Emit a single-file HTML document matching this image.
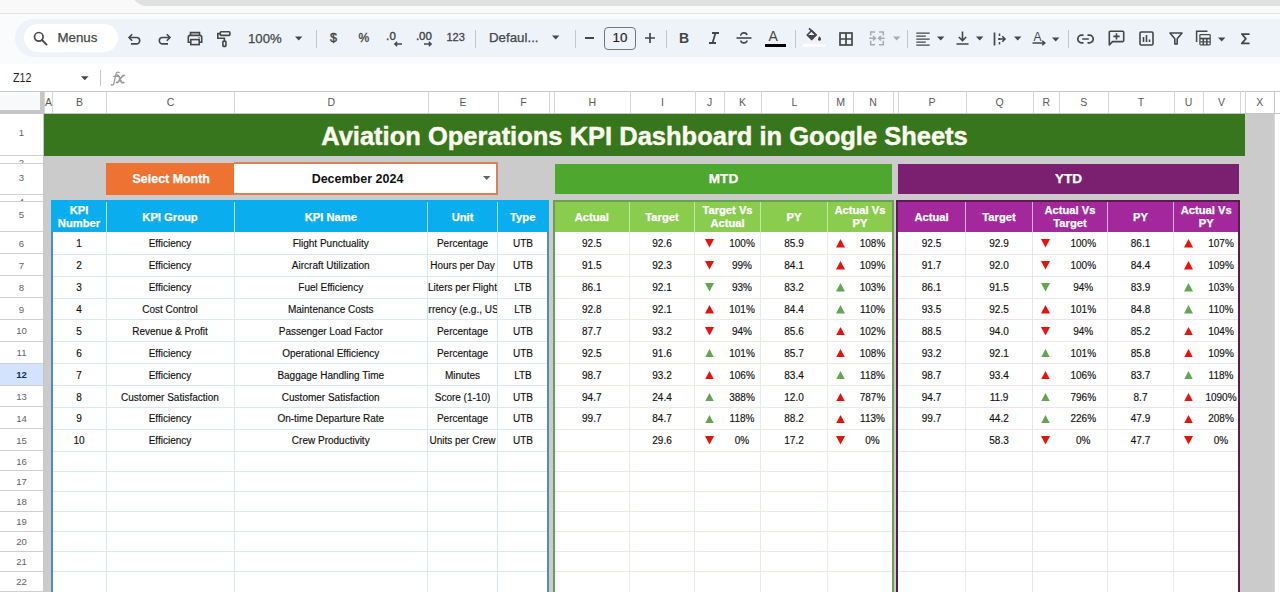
<!DOCTYPE html>
<html><head><meta charset="utf-8"><style>
html,body{margin:0;padding:0;width:1280px;height:592px;overflow:hidden;background:#fff;font-family:"Liberation Sans", sans-serif;}
.bt{-webkit-text-stroke:0.15px #111}
div{position:absolute;}
svg{position:absolute;}
</style></head><body>
<div style="left:0;top:0;width:1280px;height:13px;background:#f9f9f9"></div>
<div style="left:131px;top:-20px;width:1200px;height:25.5px;background:#dfe1e0;border-radius:0 0 0 16px"></div>
<div style="left:0;top:12.5px;width:1280px;height:1px;background:#e4e4e4"></div>
<div style="left:0;top:13.5px;width:1280px;height:50.5px;background:#f9fbfd"></div>
<div style="left:15px;top:19px;width:1300px;height:38px;background:#eef2f9;border-radius:19px"></div>
<div style="left:24px;top:24px;width:94px;height:28px;background:#fff;border-radius:14px"></div>
<div style="left:0;top:64px;width:1280px;height:27px;background:#fff"></div>
<svg style="position:absolute;left:33px;top:31px" width="15" height="15" viewBox="0 0 15 15"><circle cx="5.8" cy="5.8" r="4.3" fill="none" stroke="#444746" stroke-width="1.7"/><path d="M9 9L13.6 13.6" stroke="#444746" stroke-width="1.8" stroke-linecap="round"/></svg>
<div style="left:57.5px;top:24px;height:28px;line-height:28px;font-size:13.3px;color:#444746;-webkit-text-stroke:0.25px #444746">Menus</div>
<svg style="position:absolute;left:127px;top:32px" width="15" height="14" viewBox="0 0 15 14"><path d="M5.2 2.2L2 5.5L5.2 8.8" fill="none" stroke="#444746" stroke-width="1.6" stroke-linejoin="miter"/><path d="M2.3 5.5H9.5A3.2 3.2 0 0 1 9.5 11.9H4" fill="none" stroke="#444746" stroke-width="1.6"/></svg>
<svg style="position:absolute;left:157px;top:32px" width="15" height="14" viewBox="0 0 15 14"><g transform="translate(15,0) scale(-1,1)"><path d="M5.2 2.2L2 5.5L5.2 8.8" fill="none" stroke="#444746" stroke-width="1.6"/><path d="M2.3 5.5H9.5A3.2 3.2 0 0 1 9.5 11.9H4" fill="none" stroke="#444746" stroke-width="1.6"/></g></svg>
<svg style="position:absolute;left:186px;top:31px" width="18" height="15" viewBox="0 0 18 15"><path d="M4.5 4.3V1.6H13.5V4.3" fill="none" stroke="#444746" stroke-width="1.6"/><path d="M4.3 11.3H2.3V6.2A1.8 1.8 0 0 1 4.1 4.4H13.9A1.8 1.8 0 0 1 15.7 6.2V11.3H13.7" fill="none" stroke="#444746" stroke-width="1.6"/><rect x="4.8" y="8.6" width="8.4" height="5" fill="none" stroke="#444746" stroke-width="1.6"/><circle cx="13" cy="6.8" r="0.7" fill="#444746"/></svg>
<svg style="position:absolute;left:216px;top:30px" width="16" height="18" viewBox="0 0 16 18"><rect x="4.3" y="1.8" width="9.6" height="3.6" rx="0.8" fill="none" stroke="#444746" stroke-width="1.6"/><path d="M4.3 3.6H1.8V8.2H8.4V11" fill="none" stroke="#444746" stroke-width="1.6"/><rect x="6.9" y="11.2" width="3" height="5.2" rx="0.6" fill="none" stroke="#444746" stroke-width="1.6"/></svg>
<div style="left:248px;top:24.8px;height:28px;line-height:28px;font-size:13.2px;color:#444746;-webkit-text-stroke:0.25px #444746">100%</div>
<svg style="position:absolute;left:295px;top:35.5px" width="8" height="5" viewBox="0 0 8 5"><path d="M0 0.5H7.4L3.7 4.4Z" fill="#444746"/></svg>
<div style="left:316px;top:29.5px;width:1px;height:18px;background:#c7c7c7"></div>
<div style="left:330px;top:24px;height:28px;line-height:28px;font-size:12.5px;color:#444746;-webkit-text-stroke:0.45px #444746">$</div>
<div style="left:358.5px;top:24px;height:28px;line-height:28px;font-size:12px;color:#444746;-webkit-text-stroke:0.35px #444746">%</div>
<div style="left:386px;top:22px;height:28px;line-height:28px;font-size:11.5px;color:#444746;-webkit-text-stroke:0.4px #444746;letter-spacing:0.2px">.0</div>
<svg style="position:absolute;left:393px;top:41px" width="10" height="6" viewBox="0 0 10 6"><path d="M9 3H2M4.2 0.8L1.8 3L4.2 5.2" fill="none" stroke="#444746" stroke-width="1.4"/></svg>
<div style="left:416px;top:22px;height:28px;line-height:28px;font-size:11.5px;color:#444746;-webkit-text-stroke:0.4px #444746;letter-spacing:-0.1px">.00</div>
<svg style="position:absolute;left:423px;top:41px" width="10" height="6" viewBox="0 0 10 6"><path d="M1 3H8M5.8 0.8L8.2 3L5.8 5.2" fill="none" stroke="#444746" stroke-width="1.4"/></svg>
<div style="left:446.5px;top:22.8px;height:28px;line-height:28px;font-size:11px;color:#444746;-webkit-text-stroke:0.3px #444746">123</div>
<div style="left:474.5px;top:29.5px;width:1px;height:18px;background:#c7c7c7"></div>
<div style="left:489px;top:24px;height:28px;line-height:28px;font-size:13.3px;color:#444746;-webkit-text-stroke:0.25px #444746">Defaul...</div>
<svg style="position:absolute;left:552px;top:35.3px" width="8" height="5" viewBox="0 0 8 5"><path d="M0 0.5H7.4L3.7 4.4Z" fill="#444746"/></svg>
<div style="left:574.5px;top:29.5px;width:1px;height:18px;background:#c7c7c7"></div>
<div style="left:584.5px;top:37.2px;width:9.5px;height:1.6px;background:#444746"></div>
<div style="left:604px;top:27px;width:32px;height:22.5px;border:1px solid #747775;border-radius:4px;box-sizing:border-box;text-align:center;line-height:20.5px;font-size:13.3px;color:#1f1f1f;-webkit-text-stroke:0.2px #1f1f1f">10</div>
<svg style="position:absolute;left:644.8px;top:33px" width="10" height="10" viewBox="0 0 10 10"><path d="M5 0V10M0 5H10" stroke="#444746" stroke-width="1.7"/></svg>
<div style="left:666px;top:29.5px;width:1px;height:18px;background:#c7c7c7"></div>
<div style="left:679px;top:24px;height:28px;line-height:28px;font-size:14px;font-weight:bold;color:#444746">B</div>
<svg style="position:absolute;left:708px;top:32px" width="12" height="12" viewBox="0 0 12 12"><path d="M4 1H11M1 11H8M7.5 1L4.5 11" fill="none" stroke="#444746" stroke-width="1.8"/></svg>
<svg style="position:absolute;left:736px;top:32px" width="16" height="12" viewBox="0 0 16 12"><path d="M0.5 6H15.5" stroke="#444746" stroke-width="1.6"/><path d="M4.8 3.6A3 2.4 0 0 1 11 3.2M4.8 8.6A3.1 2.3 0 0 0 11 8.6" fill="none" stroke="#444746" stroke-width="1.6"/></svg>
<div style="left:768.5px;top:22px;height:28px;line-height:28px;font-size:14px;color:#444746">A</div>
<div style="left:765px;top:43.7px;width:21px;height:3.2px;background:#000"></div>
<div style="left:794.5px;top:29.5px;width:1px;height:18px;background:#c7c7c7"></div>
<svg style="position:absolute;left:798px;top:24px" width="32" height="26" viewBox="0 0 32 26"><path d="M11 4.3L18.2 11.3" stroke="#444746" stroke-width="1.7"/><path d="M9.2 11L13.7 6.5L18.2 11L13.7 15.5Z" fill="none" stroke="#444746" stroke-width="1.7" stroke-linejoin="round"/><path d="M9.2 11H18.2L13.7 15.5Z" fill="#444746"/><path d="M21.5 12.2C22.7 13.9 23 14.6 23 15.3A1.5 1.5 0 0 1 20 15.3C20 14.6 20.3 13.9 21.5 12.2Z" fill="#444746"/><rect x="4.5" y="19.8" width="22.5" height="3" fill="#fff"/></svg>
<svg style="position:absolute;left:838.5px;top:31.5px" width="14" height="14" viewBox="0 0 14 14"><rect x="1" y="1" width="12" height="12" fill="none" stroke="#444746" stroke-width="1.7"/><path d="M7 1V13M1 7H13" stroke="#444746" stroke-width="1.7"/></svg>
<svg style="position:absolute;left:866px;top:29px" width="22" height="19" viewBox="0 0 22 19"><path d="M9 3H4.7V6.5M4.7 11.8V15.7H9M13 3H17.3V6.5M17.3 11.8V15.7H13" fill="none" stroke="#a9abaa" stroke-width="1.5"/><path d="M3.3 9.2H9.3M7.1 7L9.4 9.2L7.1 11.4M18.7 9.2H12.7M14.9 7L12.6 9.2L14.9 11.4" fill="none" stroke="#a9abaa" stroke-width="1.5"/></svg>
<svg style="position:absolute;left:893px;top:36.4px" width="8" height="5" viewBox="0 0 8 5"><path d="M0 0.5H7.4L3.7 4.4Z" fill="#a9abaa"/></svg>
<div style="left:906.5px;top:29.5px;width:1px;height:18px;background:#c7c7c7"></div>
<svg style="position:absolute;left:916px;top:31.5px" width="14" height="14" viewBox="0 0 14 14"><path d="M0.3 1.1H13.7M0.3 4.1H9.8M0.3 7.1H13.7M0.3 10.1H9.8M0.3 13.1H13.7" stroke="#444746" stroke-width="1.3"/></svg>
<svg style="position:absolute;left:936.5px;top:36.4px" width="8" height="5" viewBox="0 0 8 5"><path d="M0 0.5H7.4L3.7 4.4Z" fill="#444746"/></svg>
<svg style="position:absolute;left:955.5px;top:31px" width="13" height="14" viewBox="0 0 13 14"><path d="M6.5 0.5V9.5M2.8 6L6.5 9.6L10.2 6M0.5 13H12.5" fill="none" stroke="#444746" stroke-width="1.6"/></svg>
<svg style="position:absolute;left:975.5px;top:36.4px" width="8" height="5" viewBox="0 0 8 5"><path d="M0 0.5H7.4L3.7 4.4Z" fill="#444746"/></svg>
<svg style="position:absolute;left:993px;top:31.5px" width="14" height="14" viewBox="0 0 14 14"><path d="M1.5 0.5V13.5" stroke="#444746" stroke-width="1.7"/><path d="M6.5 1.5V4M6.5 6V8M6.5 10V12.5" stroke="#444746" stroke-width="1.5"/><path d="M5 7H11.8M9.3 4.3L12 7L9.3 9.7" fill="none" stroke="#444746" stroke-width="1.6"/></svg>
<svg style="position:absolute;left:1014px;top:36.4px" width="8" height="5" viewBox="0 0 8 5"><path d="M0 0.5H7.4L3.7 4.4Z" fill="#444746"/></svg>
<div style="left:1033.5px;top:22.5px;height:28px;line-height:28px;font-size:12px;color:#444746">A</div>
<svg style="position:absolute;left:1032px;top:39.5px" width="14" height="6" viewBox="0 0 14 6"><path d="M0.5 3H12.6M10.2 0.8L12.8 3L10.2 5.2" fill="none" stroke="#444746" stroke-width="1.5"/></svg>
<svg style="position:absolute;left:1052px;top:36.5px" width="8" height="5" viewBox="0 0 8 5"><path d="M0 0.5H7.4L3.7 4.4Z" fill="#444746"/></svg>
<div style="left:1067.5px;top:29.5px;width:1px;height:18px;background:#c7c7c7"></div>
<svg style="position:absolute;left:1077px;top:33.5px" width="17" height="10" viewBox="0 0 17 10"><path d="M6.5 1.2H4.6A3.8 3.8 0 0 0 4.6 8.8H6.5M10.5 1.2H12.4A3.8 3.8 0 0 1 12.4 8.8H10.5M5.2 5H11.8" fill="none" stroke="#444746" stroke-width="1.7"/></svg>
<svg style="position:absolute;left:1107.5px;top:30px" width="17" height="16" viewBox="0 0 17 16"><path d="M1.3 15V2.2A1 1 0 0 1 2.3 1.2H14.7A1 1 0 0 1 15.7 2.2V10.6A1 1 0 0 1 14.7 11.6H4.5Z" fill="none" stroke="#444746" stroke-width="1.6" stroke-linejoin="round"/><path d="M8.5 3.2V9.6M5.3 6.4H11.7" stroke="#444746" stroke-width="1.6"/></svg>
<svg style="position:absolute;left:1139px;top:31px" width="15" height="15" viewBox="0 0 15 15"><rect x="1" y="1" width="13" height="13" rx="1.2" fill="none" stroke="#444746" stroke-width="1.6"/><path d="M4.5 6V11M7.5 4V11M10.5 8.5V11" stroke="#444746" stroke-width="1.6"/></svg>
<svg style="position:absolute;left:1169px;top:32px" width="14" height="13" viewBox="0 0 14 13"><path d="M1 1H13L8.2 6.8V12H5.8V6.8Z" fill="none" stroke="#444746" stroke-width="1.6" stroke-linejoin="round"/></svg>
<svg style="position:absolute;left:1195px;top:30px" width="17" height="17" viewBox="0 0 17 17"><path d="M1.6 12V1.2H12.5" fill="none" stroke="#444746" stroke-width="1.5"/><rect x="4.3" y="3.9" width="11.5" height="11.5" rx="1.3" fill="#444746"/><rect x="5.5" y="5.2" width="9.1" height="2.5" fill="#eef2f9"/><rect x="5.5" y="9.4" width="2" height="1.9" fill="#eef2f9"/><rect x="5.5" y="12.4" width="2" height="1.9" fill="#eef2f9"/><rect x="9.05" y="9.4" width="2" height="1.9" fill="#eef2f9"/><rect x="9.05" y="12.4" width="2" height="1.9" fill="#eef2f9"/><rect x="12.6" y="9.4" width="2" height="1.9" fill="#eef2f9"/><rect x="12.6" y="12.4" width="2" height="1.9" fill="#eef2f9"/></svg>
<svg style="position:absolute;left:1217.5px;top:36.5px" width="8" height="5" viewBox="0 0 8 5"><path d="M0 0.5H7.4L3.7 4.4Z" fill="#444746"/></svg>
<svg style="position:absolute;left:1240.5px;top:33px" width="10" height="12" viewBox="0 0 10 12"><path d="M8.6 1.1H1L4.8 5.7L1 10.3H8.6" fill="none" stroke="#444746" stroke-width="1.8" stroke-linejoin="miter"/></svg>
<div style="left:13px;top:65.3px;height:27px;line-height:27px;font-size:12.4px;transform:scaleX(0.86);transform-origin:0 0;color:#1f1f1f">Z12</div>
<svg style="position:absolute;left:81px;top:75.5px" width="8" height="5" viewBox="0 0 8 5"><path d="M0 0.2H7.6L3.8 4.2Z" fill="#444746"/></svg>
<div style="left:99.8px;top:70px;width:1px;height:16px;background:#c7c7c7"></div>
<svg style="position:absolute;left:110px;top:70px" width="17" height="17" viewBox="0 0 17 17"><path d="M9.2 2.6C7.8 1.7 6.4 2.1 5.9 4.1L4 13C3.6 14.8 2.6 15.4 1.3 14.8M3.6 6.3H8" fill="none" stroke="#9a9a9a" stroke-width="1.3" stroke-linecap="round"/><path d="M7.2 5.2C8.2 5 8.8 5.6 9.5 7.5L11.3 11.8C11.8 12.8 12.5 13 13.8 12.4M14.2 5.4C13 5.3 12.3 6 11.2 7.6L8.6 11.4C8 12.4 7.3 12.8 6.6 12.5" fill="none" stroke="#999" stroke-width="1.7" stroke-linecap="round"/></svg>
<div style="left:0.00px;top:91.00px;width:1280.00px;height:23.00px;background:#fff;border-top:1px solid #c4c7c5;box-sizing:border-box"></div>
<div style="left:44.00px;top:91.00px;width:8.00px;height:23.00px;border-left:1px solid #d6d6d6;box-sizing:border-box;text-align:center;line-height:23px;font-size:10.5px;color:#5a5a5a">A</div>
<div style="left:52.00px;top:91.00px;width:54.00px;height:23.00px;border-left:1px solid #d6d6d6;box-sizing:border-box;text-align:center;line-height:23px;font-size:10.5px;color:#5a5a5a">B</div>
<div style="left:106.00px;top:91.00px;width:128.00px;height:23.00px;border-left:1px solid #d6d6d6;box-sizing:border-box;text-align:center;line-height:23px;font-size:10.5px;color:#5a5a5a">C</div>
<div style="left:234.00px;top:91.00px;width:193.50px;height:23.00px;border-left:1px solid #d6d6d6;box-sizing:border-box;text-align:center;line-height:23px;font-size:10.5px;color:#5a5a5a">D</div>
<div style="left:427.50px;top:91.00px;width:70.00px;height:23.00px;border-left:1px solid #d6d6d6;box-sizing:border-box;text-align:center;line-height:23px;font-size:10.5px;color:#5a5a5a">E</div>
<div style="left:497.50px;top:91.00px;width:51.00px;height:23.00px;border-left:1px solid #d6d6d6;box-sizing:border-box;text-align:center;line-height:23px;font-size:10.5px;color:#5a5a5a">F</div>
<div style="left:548.50px;top:91.00px;width:5.50px;height:23.00px;border-left:1px solid #d6d6d6;box-sizing:border-box;text-align:center;line-height:23px;font-size:10.5px;color:#5a5a5a"></div>
<div style="left:554.00px;top:91.00px;width:75.50px;height:23.00px;border-left:1px solid #d6d6d6;box-sizing:border-box;text-align:center;line-height:23px;font-size:10.5px;color:#5a5a5a">H</div>
<div style="left:629.50px;top:91.00px;width:65.00px;height:23.00px;border-left:1px solid #d6d6d6;box-sizing:border-box;text-align:center;line-height:23px;font-size:10.5px;color:#5a5a5a">I</div>
<div style="left:694.50px;top:91.00px;width:29.00px;height:23.00px;border-left:1px solid #d6d6d6;box-sizing:border-box;text-align:center;line-height:23px;font-size:10.5px;color:#5a5a5a">J</div>
<div style="left:723.50px;top:91.00px;width:37.00px;height:23.00px;border-left:1px solid #d6d6d6;box-sizing:border-box;text-align:center;line-height:23px;font-size:10.5px;color:#5a5a5a">K</div>
<div style="left:760.50px;top:91.00px;width:67.00px;height:23.00px;border-left:1px solid #d6d6d6;box-sizing:border-box;text-align:center;line-height:23px;font-size:10.5px;color:#5a5a5a">L</div>
<div style="left:827.50px;top:91.00px;width:25.00px;height:23.00px;border-left:1px solid #d6d6d6;box-sizing:border-box;text-align:center;line-height:23px;font-size:10.5px;color:#5a5a5a">M</div>
<div style="left:852.50px;top:91.00px;width:40.00px;height:23.00px;border-left:1px solid #d6d6d6;box-sizing:border-box;text-align:center;line-height:23px;font-size:10.5px;color:#5a5a5a">N</div>
<div style="left:892.50px;top:91.00px;width:5.00px;height:23.00px;border-left:1px solid #d6d6d6;box-sizing:border-box;text-align:center;line-height:23px;font-size:10.5px;color:#5a5a5a"></div>
<div style="left:897.50px;top:91.00px;width:68.00px;height:23.00px;border-left:1px solid #d6d6d6;box-sizing:border-box;text-align:center;line-height:23px;font-size:10.5px;color:#5a5a5a">P</div>
<div style="left:965.50px;top:91.00px;width:67.00px;height:23.00px;border-left:1px solid #d6d6d6;box-sizing:border-box;text-align:center;line-height:23px;font-size:10.5px;color:#5a5a5a">Q</div>
<div style="left:1032.50px;top:91.00px;width:26.50px;height:23.00px;border-left:1px solid #d6d6d6;box-sizing:border-box;text-align:center;line-height:23px;font-size:10.5px;color:#5a5a5a">R</div>
<div style="left:1059.00px;top:91.00px;width:48.50px;height:23.00px;border-left:1px solid #d6d6d6;box-sizing:border-box;text-align:center;line-height:23px;font-size:10.5px;color:#5a5a5a">S</div>
<div style="left:1107.50px;top:91.00px;width:66.00px;height:23.00px;border-left:1px solid #d6d6d6;box-sizing:border-box;text-align:center;line-height:23px;font-size:10.5px;color:#5a5a5a">T</div>
<div style="left:1173.50px;top:91.00px;width:29.00px;height:23.00px;border-left:1px solid #d6d6d6;box-sizing:border-box;text-align:center;line-height:23px;font-size:10.5px;color:#5a5a5a">U</div>
<div style="left:1202.50px;top:91.00px;width:37.00px;height:23.00px;border-left:1px solid #d6d6d6;box-sizing:border-box;text-align:center;line-height:23px;font-size:10.5px;color:#5a5a5a">V</div>
<div style="left:1239.50px;top:91.00px;width:5.50px;height:23.00px;border-left:1px solid #d6d6d6;box-sizing:border-box;text-align:center;line-height:23px;font-size:10.5px;color:#5a5a5a"></div>
<div style="left:1245.00px;top:91.00px;width:28.50px;height:23.00px;border-left:1px solid #d6d6d6;box-sizing:border-box;text-align:center;line-height:23px;font-size:10.5px;color:#5a5a5a">X</div>
<div style="left:1273.50px;top:91.00px;width:56.50px;height:23.00px;border-left:1px solid #c4c7c5;box-sizing:border-box"></div>
<div style="left:44.00px;top:113.00px;width:1236.00px;height:1.00px;background:#c4c7c5"></div>
<div style="left:0.00px;top:92.00px;width:44.00px;height:22.00px;background:#f8f9fa"></div>
<div style="left:40.00px;top:92.00px;width:4.00px;height:22.00px;background:#c6c6c6"></div>
<div style="left:0.00px;top:110.00px;width:44.00px;height:4.00px;background:#c6c6c6"></div>
<div style="left:0.00px;top:114.00px;width:43.00px;height:41.50px;background:#fff;border-bottom:1px solid #d0d0d0;box-sizing:border-box;overflow:hidden;text-align:center;font-size:9.6px;color:#5f6368;font-weight:normal;line-height:41.5px"><span style="position:relative;top:-1.7px">1</span></div>
<div style="left:0.00px;top:155.50px;width:43.00px;height:8.00px;background:#fff;border-bottom:1px solid #d0d0d0;box-sizing:border-box;overflow:hidden;text-align:center;font-size:9.6px;color:#5f6368;font-weight:normal;line-height:10.6px"><span style="position:relative;top:2.8px">2</span></div>
<div style="left:0.00px;top:163.50px;width:43.00px;height:31.00px;background:#fff;border-bottom:1px solid #d0d0d0;box-sizing:border-box;overflow:hidden;text-align:center;font-size:9.6px;color:#5f6368;font-weight:normal;line-height:31.0px"><span style="position:relative;top:-1.7px">3</span></div>
<div style="left:0.00px;top:194.50px;width:43.00px;height:7.00px;background:#fff;border-bottom:1px solid #d0d0d0;box-sizing:border-box;overflow:hidden;text-align:center;font-size:9.6px;color:#5f6368;font-weight:normal;line-height:10.6px"><span style="position:relative;top:2.4px">4</span></div>
<div style="left:0.00px;top:201.50px;width:43.00px;height:30.80px;background:#fff;border-bottom:1px solid #d0d0d0;box-sizing:border-box;overflow:hidden;text-align:center;font-size:9.6px;color:#5f6368;font-weight:normal;line-height:30.8px"><span style="position:relative;top:-1.7px">5</span></div>
<div style="left:0.00px;top:232.30px;width:43.00px;height:21.90px;background:#fff;border-bottom:1px solid #d0d0d0;box-sizing:border-box;overflow:hidden;text-align:center;font-size:9.6px;color:#5f6368;font-weight:normal;line-height:21.9px"><span style="position:relative;top:0.6px">6</span></div>
<div style="left:0.00px;top:254.20px;width:43.00px;height:21.90px;background:#fff;border-bottom:1px solid #d0d0d0;box-sizing:border-box;overflow:hidden;text-align:center;font-size:9.6px;color:#5f6368;font-weight:normal;line-height:21.9px"><span style="position:relative;top:0.6px">7</span></div>
<div style="left:0.00px;top:276.10px;width:43.00px;height:21.90px;background:#fff;border-bottom:1px solid #d0d0d0;box-sizing:border-box;overflow:hidden;text-align:center;font-size:9.6px;color:#5f6368;font-weight:normal;line-height:21.9px"><span style="position:relative;top:0.6px">8</span></div>
<div style="left:0.00px;top:298.00px;width:43.00px;height:21.90px;background:#fff;border-bottom:1px solid #d0d0d0;box-sizing:border-box;overflow:hidden;text-align:center;font-size:9.6px;color:#5f6368;font-weight:normal;line-height:21.9px"><span style="position:relative;top:0.6px">9</span></div>
<div style="left:0.00px;top:319.90px;width:43.00px;height:21.90px;background:#fff;border-bottom:1px solid #d0d0d0;box-sizing:border-box;overflow:hidden;text-align:center;font-size:9.6px;color:#5f6368;font-weight:normal;line-height:21.9px"><span style="position:relative;top:0.6px">10</span></div>
<div style="left:0.00px;top:341.80px;width:43.00px;height:21.90px;background:#fff;border-bottom:1px solid #d0d0d0;box-sizing:border-box;overflow:hidden;text-align:center;font-size:9.6px;color:#5f6368;font-weight:normal;line-height:21.9px"><span style="position:relative;top:0.6px">11</span></div>
<div style="left:0.00px;top:363.70px;width:43.00px;height:21.90px;background:#d3e3fd;border-bottom:1px solid #d0d0d0;box-sizing:border-box;overflow:hidden;text-align:center;font-size:9.6px;color:#0b2f6b;font-weight:bold;line-height:21.9px"><span style="position:relative;top:0.6px">12</span></div>
<div style="left:0.00px;top:385.60px;width:43.00px;height:21.90px;background:#fff;border-bottom:1px solid #d0d0d0;box-sizing:border-box;overflow:hidden;text-align:center;font-size:9.6px;color:#5f6368;font-weight:normal;line-height:21.9px"><span style="position:relative;top:0.6px">13</span></div>
<div style="left:0.00px;top:407.50px;width:43.00px;height:21.90px;background:#fff;border-bottom:1px solid #d0d0d0;box-sizing:border-box;overflow:hidden;text-align:center;font-size:9.6px;color:#5f6368;font-weight:normal;line-height:21.9px"><span style="position:relative;top:0.6px">14</span></div>
<div style="left:0.00px;top:429.40px;width:43.00px;height:21.90px;background:#fff;border-bottom:1px solid #d0d0d0;box-sizing:border-box;overflow:hidden;text-align:center;font-size:9.6px;color:#5f6368;font-weight:normal;line-height:21.9px"><span style="position:relative;top:0.6px">15</span></div>
<div style="left:0.00px;top:451.30px;width:43.00px;height:20.10px;background:#fff;border-bottom:1px solid #d0d0d0;box-sizing:border-box;overflow:hidden;text-align:center;font-size:9.6px;color:#5f6368;font-weight:normal;line-height:20.1px"><span style="position:relative;top:0.6px">16</span></div>
<div style="left:0.00px;top:471.40px;width:43.00px;height:20.10px;background:#fff;border-bottom:1px solid #d0d0d0;box-sizing:border-box;overflow:hidden;text-align:center;font-size:9.6px;color:#5f6368;font-weight:normal;line-height:20.1px"><span style="position:relative;top:0.6px">17</span></div>
<div style="left:0.00px;top:491.50px;width:43.00px;height:20.10px;background:#fff;border-bottom:1px solid #d0d0d0;box-sizing:border-box;overflow:hidden;text-align:center;font-size:9.6px;color:#5f6368;font-weight:normal;line-height:20.1px"><span style="position:relative;top:0.6px">18</span></div>
<div style="left:0.00px;top:511.60px;width:43.00px;height:20.10px;background:#fff;border-bottom:1px solid #d0d0d0;box-sizing:border-box;overflow:hidden;text-align:center;font-size:9.6px;color:#5f6368;font-weight:normal;line-height:20.1px"><span style="position:relative;top:0.6px">19</span></div>
<div style="left:0.00px;top:531.70px;width:43.00px;height:20.10px;background:#fff;border-bottom:1px solid #d0d0d0;box-sizing:border-box;overflow:hidden;text-align:center;font-size:9.6px;color:#5f6368;font-weight:normal;line-height:20.1px"><span style="position:relative;top:0.6px">20</span></div>
<div style="left:0.00px;top:551.80px;width:43.00px;height:20.10px;background:#fff;border-bottom:1px solid #d0d0d0;box-sizing:border-box;overflow:hidden;text-align:center;font-size:9.6px;color:#5f6368;font-weight:normal;line-height:20.1px"><span style="position:relative;top:0.6px">21</span></div>
<div style="left:0.00px;top:571.90px;width:43.00px;height:20.10px;background:#fff;border-bottom:1px solid #d0d0d0;box-sizing:border-box;overflow:hidden;text-align:center;font-size:9.6px;color:#5f6368;font-weight:normal;line-height:20.1px"><span style="position:relative;top:0.6px">22</span></div>
<div style="left:43.00px;top:114.00px;width:1.00px;height:478.00px;background:#c4c7c5"></div>
<div style="left:44.00px;top:114.00px;width:1230.00px;height:478.00px;background:#cbcbcb"></div>
<div style="left:1274.00px;top:114.00px;width:6.00px;height:478.00px;background:#fff"></div>
<div style="left:1274.00px;top:114.00px;width:1.00px;height:478.00px;background:#dadada"></div>
<div style="left:44.00px;top:114.00px;width:1201.00px;height:41.50px;background:#38761d;color:#fcfdf0;-webkit-text-stroke:0.45px #fcfdf0;font-weight:bold;font-size:25.5px;text-align:center;line-height:45px">Aviation Operations KPI Dashboard in Google Sheets</div>
<div style="left:105.50px;top:163.00px;width:128.50px;height:32.00px;background:#ee7231"></div>
<div style="left:107.00px;top:163.00px;width:128.50px;height:32.00px;line-height:32.00px;font-size:12.45px;font-weight:bold;color:#fff;text-align:center;white-space:nowrap;-webkit-text-stroke:0.25px #fff">Select Month</div>
<div style="left:234.00px;top:162.00px;width:264.00px;height:33.00px;background:#fff;border:2px solid #d9825a;border-left:none;box-sizing:border-box"></div>
<div style="left:234.00px;top:162.60px;width:247.00px;height:32.00px;line-height:32.00px;font-size:12.5px;font-weight:bold;color:#111;text-align:center;white-space:nowrap;">December 2024</div>
<svg style="position:absolute;left:483px;top:176.3px" width="8" height="5"><path d="M0 0H7.4L3.7 4Z" fill="#666"/></svg>
<div style="left:555.00px;top:164.00px;width:337.00px;height:30.00px;background:#4ea72e"></div>
<div style="left:555.00px;top:164.30px;width:337.00px;height:30.00px;line-height:30.00px;font-size:13.6px;font-weight:bold;color:#fff;text-align:center;white-space:nowrap;-webkit-text-stroke:0.25px #fff">MTD</div>
<div style="left:898.00px;top:164.00px;width:341.00px;height:30.00px;background:#7b1f70"></div>
<div style="left:898.00px;top:164.30px;width:341.00px;height:30.00px;line-height:30.00px;font-size:13.6px;font-weight:bold;color:#fff;text-align:center;white-space:nowrap;-webkit-text-stroke:0.25px #fff">YTD</div>
<div style="left:51.00px;top:200.30px;width:498.00px;height:392.00px;background:#fff;border:2px solid #4a90b8;border-top:none;border-bottom:none;box-sizing:border-box"></div>
<div style="left:51.00px;top:200.30px;width:498.00px;height:31.70px;background:#0aaeee;border:2px solid #0aaeee;border-bottom:none;box-sizing:border-box"></div>
<div style="left:53.00px;top:253.70px;width:494.00px;height:1.00px;background:#d8eaf0"></div>
<div style="left:53.00px;top:275.60px;width:494.00px;height:1.00px;background:#d8eaf0"></div>
<div style="left:53.00px;top:297.50px;width:494.00px;height:1.00px;background:#d8eaf0"></div>
<div style="left:53.00px;top:319.40px;width:494.00px;height:1.00px;background:#d8eaf0"></div>
<div style="left:53.00px;top:341.30px;width:494.00px;height:1.00px;background:#d8eaf0"></div>
<div style="left:53.00px;top:363.20px;width:494.00px;height:1.00px;background:#d8eaf0"></div>
<div style="left:53.00px;top:385.10px;width:494.00px;height:1.00px;background:#d8eaf0"></div>
<div style="left:53.00px;top:407.00px;width:494.00px;height:1.00px;background:#d8eaf0"></div>
<div style="left:53.00px;top:428.90px;width:494.00px;height:1.00px;background:#d8eaf0"></div>
<div style="left:53.00px;top:450.80px;width:494.00px;height:1.00px;background:#d8eaf0"></div>
<div style="left:53.00px;top:470.90px;width:494.00px;height:1.00px;background:#d8eaf0"></div>
<div style="left:53.00px;top:491.00px;width:494.00px;height:1.00px;background:#d8eaf0"></div>
<div style="left:53.00px;top:511.10px;width:494.00px;height:1.00px;background:#d8eaf0"></div>
<div style="left:53.00px;top:531.20px;width:494.00px;height:1.00px;background:#d8eaf0"></div>
<div style="left:53.00px;top:551.30px;width:494.00px;height:1.00px;background:#d8eaf0"></div>
<div style="left:53.00px;top:571.40px;width:494.00px;height:1.00px;background:#d8eaf0"></div>
<div style="left:53.00px;top:591.50px;width:494.00px;height:1.00px;background:#d8eaf0"></div>
<div style="left:105.50px;top:232.00px;width:1.00px;height:360.00px;background:#d8eaf0"></div>
<div style="left:233.50px;top:232.00px;width:1.00px;height:360.00px;background:#d8eaf0"></div>
<div style="left:427.00px;top:232.00px;width:1.00px;height:360.00px;background:#d8eaf0"></div>
<div style="left:497.00px;top:232.00px;width:1.00px;height:360.00px;background:#d8eaf0"></div>
<div style="left:105.50px;top:202.30px;width:1.00px;height:29.70px;background:#a8e4fa"></div>
<div style="left:233.50px;top:202.30px;width:1.00px;height:29.70px;background:#a8e4fa"></div>
<div style="left:427.00px;top:202.30px;width:1.00px;height:29.70px;background:#a8e4fa"></div>
<div style="left:497.00px;top:202.30px;width:1.00px;height:29.70px;background:#a8e4fa"></div>
<div style="left:52.00px;top:203.50px;width:54.00px;height:13.00px;line-height:13.00px;font-size:11.2px;font-weight:bold;color:#fff;text-align:center;white-space:nowrap;-webkit-text-stroke:0.25px #fff">KPI</div>
<div style="left:52.00px;top:216.80px;width:54.00px;height:13.00px;line-height:13.00px;font-size:11.2px;font-weight:bold;color:#fff;text-align:center;white-space:nowrap;-webkit-text-stroke:0.25px #fff">Number</div>
<div style="left:106.00px;top:202.10px;width:128.00px;height:30.80px;line-height:30.80px;font-size:11.2px;font-weight:bold;color:#fff;text-align:center;white-space:nowrap;-webkit-text-stroke:0.25px #fff">KPI Group</div>
<div style="left:234.00px;top:202.10px;width:193.50px;height:30.80px;line-height:30.80px;font-size:11.2px;font-weight:bold;color:#fff;text-align:center;white-space:nowrap;-webkit-text-stroke:0.25px #fff">KPI Name</div>
<div style="left:427.50px;top:202.10px;width:70.00px;height:30.80px;line-height:30.80px;font-size:11.2px;font-weight:bold;color:#fff;text-align:center;white-space:nowrap;-webkit-text-stroke:0.25px #fff">Unit</div>
<div style="left:497.50px;top:202.10px;width:50.50px;height:30.80px;line-height:30.80px;font-size:11.2px;font-weight:bold;color:#fff;text-align:center;white-space:nowrap;-webkit-text-stroke:0.25px #fff">Type</div>
<div style="left:553.00px;top:200.30px;width:340.50px;height:392.00px;background:#fff;border:2px solid #6a9f55;border-top:none;border-bottom:none;box-sizing:border-box"></div>
<div style="left:553.00px;top:200.30px;width:340.50px;height:31.70px;background:#8acd4e;border:2px solid #6a9f55;border-bottom:none;box-sizing:border-box"></div>
<div style="left:555.00px;top:253.70px;width:336.50px;height:1.00px;background:#e6ede3"></div>
<div style="left:555.00px;top:275.60px;width:336.50px;height:1.00px;background:#e6ede3"></div>
<div style="left:555.00px;top:297.50px;width:336.50px;height:1.00px;background:#e6ede3"></div>
<div style="left:555.00px;top:319.40px;width:336.50px;height:1.00px;background:#e6ede3"></div>
<div style="left:555.00px;top:341.30px;width:336.50px;height:1.00px;background:#e6ede3"></div>
<div style="left:555.00px;top:363.20px;width:336.50px;height:1.00px;background:#e6ede3"></div>
<div style="left:555.00px;top:385.10px;width:336.50px;height:1.00px;background:#e6ede3"></div>
<div style="left:555.00px;top:407.00px;width:336.50px;height:1.00px;background:#e6ede3"></div>
<div style="left:555.00px;top:428.90px;width:336.50px;height:1.00px;background:#e6ede3"></div>
<div style="left:555.00px;top:450.80px;width:336.50px;height:1.00px;background:#e6ede3"></div>
<div style="left:555.00px;top:470.90px;width:336.50px;height:1.00px;background:#e6ede3"></div>
<div style="left:555.00px;top:491.00px;width:336.50px;height:1.00px;background:#e6ede3"></div>
<div style="left:555.00px;top:511.10px;width:336.50px;height:1.00px;background:#e6ede3"></div>
<div style="left:555.00px;top:531.20px;width:336.50px;height:1.00px;background:#e6ede3"></div>
<div style="left:555.00px;top:551.30px;width:336.50px;height:1.00px;background:#e6ede3"></div>
<div style="left:555.00px;top:571.40px;width:336.50px;height:1.00px;background:#e6ede3"></div>
<div style="left:555.00px;top:591.50px;width:336.50px;height:1.00px;background:#e6ede3"></div>
<div style="left:629.00px;top:232.00px;width:1.00px;height:360.00px;background:#e6ede3"></div>
<div style="left:694.00px;top:232.00px;width:1.00px;height:360.00px;background:#e6ede3"></div>
<div style="left:760.00px;top:232.00px;width:1.00px;height:360.00px;background:#e6ede3"></div>
<div style="left:827.00px;top:232.00px;width:1.00px;height:360.00px;background:#e6ede3"></div>
<div style="left:629.00px;top:202.30px;width:1.00px;height:29.70px;background:#c2e8a8"></div>
<div style="left:694.00px;top:202.30px;width:1.00px;height:29.70px;background:#c2e8a8"></div>
<div style="left:760.00px;top:202.30px;width:1.00px;height:29.70px;background:#c2e8a8"></div>
<div style="left:827.00px;top:202.30px;width:1.00px;height:29.70px;background:#c2e8a8"></div>
<div style="left:554.00px;top:202.10px;width:75.50px;height:30.80px;line-height:30.80px;font-size:11.2px;font-weight:bold;color:#fff;text-align:center;white-space:nowrap;-webkit-text-stroke:0.25px #fff">Actual</div>
<div style="left:629.50px;top:202.10px;width:65.00px;height:30.80px;line-height:30.80px;font-size:11.2px;font-weight:bold;color:#fff;text-align:center;white-space:nowrap;-webkit-text-stroke:0.25px #fff">Target</div>
<div style="left:694.50px;top:203.50px;width:66.00px;height:13.00px;line-height:13.00px;font-size:11.2px;font-weight:bold;color:#fff;text-align:center;white-space:nowrap;-webkit-text-stroke:0.25px #fff">Target Vs</div>
<div style="left:694.50px;top:216.80px;width:66.00px;height:13.00px;line-height:13.00px;font-size:11.2px;font-weight:bold;color:#fff;text-align:center;white-space:nowrap;-webkit-text-stroke:0.25px #fff">Actual</div>
<div style="left:760.50px;top:202.10px;width:67.00px;height:30.80px;line-height:30.80px;font-size:11.2px;font-weight:bold;color:#fff;text-align:center;white-space:nowrap;-webkit-text-stroke:0.25px #fff">PY</div>
<div style="left:827.50px;top:203.50px;width:65.00px;height:13.00px;line-height:13.00px;font-size:11.2px;font-weight:bold;color:#fff;text-align:center;white-space:nowrap;-webkit-text-stroke:0.25px #fff">Actual Vs</div>
<div style="left:827.50px;top:216.80px;width:65.00px;height:13.00px;line-height:13.00px;font-size:11.2px;font-weight:bold;color:#fff;text-align:center;white-space:nowrap;-webkit-text-stroke:0.25px #fff">PY</div>
<div style="left:896.00px;top:200.30px;width:344.00px;height:392.00px;background:#fff;border:2px solid #5c1a4f;border-top:none;border-bottom:none;box-sizing:border-box"></div>
<div style="left:896.00px;top:200.30px;width:344.00px;height:31.70px;background:#a3289c;border:2px solid #5c1a4f;border-bottom:none;box-sizing:border-box"></div>
<div style="left:898.00px;top:253.70px;width:340.00px;height:1.00px;background:#efe2eb"></div>
<div style="left:898.00px;top:275.60px;width:340.00px;height:1.00px;background:#efe2eb"></div>
<div style="left:898.00px;top:297.50px;width:340.00px;height:1.00px;background:#efe2eb"></div>
<div style="left:898.00px;top:319.40px;width:340.00px;height:1.00px;background:#efe2eb"></div>
<div style="left:898.00px;top:341.30px;width:340.00px;height:1.00px;background:#efe2eb"></div>
<div style="left:898.00px;top:363.20px;width:340.00px;height:1.00px;background:#efe2eb"></div>
<div style="left:898.00px;top:385.10px;width:340.00px;height:1.00px;background:#efe2eb"></div>
<div style="left:898.00px;top:407.00px;width:340.00px;height:1.00px;background:#efe2eb"></div>
<div style="left:898.00px;top:428.90px;width:340.00px;height:1.00px;background:#efe2eb"></div>
<div style="left:898.00px;top:450.80px;width:340.00px;height:1.00px;background:#efe2eb"></div>
<div style="left:898.00px;top:470.90px;width:340.00px;height:1.00px;background:#efe2eb"></div>
<div style="left:898.00px;top:491.00px;width:340.00px;height:1.00px;background:#efe2eb"></div>
<div style="left:898.00px;top:511.10px;width:340.00px;height:1.00px;background:#efe2eb"></div>
<div style="left:898.00px;top:531.20px;width:340.00px;height:1.00px;background:#efe2eb"></div>
<div style="left:898.00px;top:551.30px;width:340.00px;height:1.00px;background:#efe2eb"></div>
<div style="left:898.00px;top:571.40px;width:340.00px;height:1.00px;background:#efe2eb"></div>
<div style="left:898.00px;top:591.50px;width:340.00px;height:1.00px;background:#efe2eb"></div>
<div style="left:965.00px;top:232.00px;width:1.00px;height:360.00px;background:#efe2eb"></div>
<div style="left:1032.00px;top:232.00px;width:1.00px;height:360.00px;background:#efe2eb"></div>
<div style="left:1107.00px;top:232.00px;width:1.00px;height:360.00px;background:#efe2eb"></div>
<div style="left:1173.00px;top:232.00px;width:1.00px;height:360.00px;background:#efe2eb"></div>
<div style="left:965.00px;top:202.30px;width:1.00px;height:29.70px;background:#e0a8dc"></div>
<div style="left:1032.00px;top:202.30px;width:1.00px;height:29.70px;background:#e0a8dc"></div>
<div style="left:1107.00px;top:202.30px;width:1.00px;height:29.70px;background:#e0a8dc"></div>
<div style="left:1173.00px;top:202.30px;width:1.00px;height:29.70px;background:#e0a8dc"></div>
<div style="left:897.50px;top:202.10px;width:68.00px;height:30.80px;line-height:30.80px;font-size:11.2px;font-weight:bold;color:#fff;text-align:center;white-space:nowrap;-webkit-text-stroke:0.25px #fff">Actual</div>
<div style="left:965.50px;top:202.10px;width:67.00px;height:30.80px;line-height:30.80px;font-size:11.2px;font-weight:bold;color:#fff;text-align:center;white-space:nowrap;-webkit-text-stroke:0.25px #fff">Target</div>
<div style="left:1032.50px;top:203.50px;width:75.00px;height:13.00px;line-height:13.00px;font-size:11.2px;font-weight:bold;color:#fff;text-align:center;white-space:nowrap;-webkit-text-stroke:0.25px #fff">Actual Vs</div>
<div style="left:1032.50px;top:216.80px;width:75.00px;height:13.00px;line-height:13.00px;font-size:11.2px;font-weight:bold;color:#fff;text-align:center;white-space:nowrap;-webkit-text-stroke:0.25px #fff">Target</div>
<div style="left:1107.50px;top:202.10px;width:66.00px;height:30.80px;line-height:30.80px;font-size:11.2px;font-weight:bold;color:#fff;text-align:center;white-space:nowrap;-webkit-text-stroke:0.25px #fff">PY</div>
<div style="left:1173.50px;top:203.50px;width:65.50px;height:13.00px;line-height:13.00px;font-size:11.2px;font-weight:bold;color:#fff;text-align:center;white-space:nowrap;-webkit-text-stroke:0.25px #fff">Actual Vs</div>
<div style="left:1173.50px;top:216.80px;width:65.50px;height:13.00px;line-height:13.00px;font-size:11.2px;font-weight:bold;color:#fff;text-align:center;white-space:nowrap;-webkit-text-stroke:0.25px #fff">PY</div>
<div class="bt" style="left:52.00px;top:233.20px;width:54.00px;height:21.90px;line-height:21.90px;font-size:10px;font-weight:normal;color:#111;text-align:center;white-space:nowrap;">1</div>
<div class="bt" style="left:106.00px;top:233.20px;width:128.00px;height:21.90px;line-height:21.90px;font-size:10px;font-weight:normal;color:#111;text-align:center;white-space:nowrap;">Efficiency</div>
<div class="bt" style="left:234.00px;top:233.20px;width:193.50px;height:21.90px;line-height:21.90px;font-size:10px;font-weight:normal;color:#111;text-align:center;white-space:nowrap;">Flight Punctuality</div>
<div style="left:428.00px;top:233.20px;width:69.00px;height:21.90px;overflow:hidden;line-height:21.90px;font-size:10px;color:#111;white-space:nowrap;-webkit-text-stroke:0.15px #111"><span style="position:absolute;top:0;left:50%;transform:translateX(-50%)">Percentage</span></div>
<div class="bt" style="left:497.50px;top:233.20px;width:51.00px;height:21.90px;line-height:21.90px;font-size:10px;font-weight:normal;color:#111;text-align:center;white-space:nowrap;">UTB</div>
<div class="bt" style="left:554.00px;top:233.20px;width:75.50px;height:21.90px;line-height:21.90px;font-size:10px;font-weight:normal;color:#111;text-align:center;white-space:nowrap;">92.5</div>
<div class="bt" style="left:629.50px;top:233.20px;width:65.00px;height:21.90px;line-height:21.90px;font-size:10px;font-weight:normal;color:#111;text-align:center;white-space:nowrap;">92.6</div>
<svg style="position:absolute;left:704.50px;top:239.30px" width="9" height="8.5"><path d="M0 0H9L4.5 8.5Z" fill="#e8120c"/></svg>
<div class="bt" style="left:723.50px;top:233.20px;width:37.00px;height:21.90px;line-height:21.90px;font-size:10px;font-weight:normal;color:#111;text-align:center;white-space:nowrap;">100%</div>
<div class="bt" style="left:760.50px;top:233.20px;width:67.00px;height:21.90px;line-height:21.90px;font-size:10px;font-weight:normal;color:#111;text-align:center;white-space:nowrap;">85.9</div>
<svg style="position:absolute;left:835.50px;top:239.30px" width="9" height="8.5"><path d="M4.5 0L9 8.5H0Z" fill="#e8120c"/></svg>
<div class="bt" style="left:852.50px;top:233.20px;width:40.00px;height:21.90px;line-height:21.90px;font-size:10px;font-weight:normal;color:#111;text-align:center;white-space:nowrap;">108%</div>
<div class="bt" style="left:897.50px;top:233.20px;width:68.00px;height:21.90px;line-height:21.90px;font-size:10px;font-weight:normal;color:#111;text-align:center;white-space:nowrap;">92.5</div>
<div class="bt" style="left:965.50px;top:233.20px;width:67.00px;height:21.90px;line-height:21.90px;font-size:10px;font-weight:normal;color:#111;text-align:center;white-space:nowrap;">92.9</div>
<svg style="position:absolute;left:1041.25px;top:239.30px" width="9" height="8.5"><path d="M0 0H9L4.5 8.5Z" fill="#e8120c"/></svg>
<div class="bt" style="left:1059.00px;top:233.20px;width:48.50px;height:21.90px;line-height:21.90px;font-size:10px;font-weight:normal;color:#111;text-align:center;white-space:nowrap;">100%</div>
<div class="bt" style="left:1107.50px;top:233.20px;width:66.00px;height:21.90px;line-height:21.90px;font-size:10px;font-weight:normal;color:#111;text-align:center;white-space:nowrap;">86.1</div>
<svg style="position:absolute;left:1183.50px;top:239.30px" width="9" height="8.5"><path d="M4.5 0L9 8.5H0Z" fill="#e8120c"/></svg>
<div class="bt" style="left:1202.50px;top:233.20px;width:37.00px;height:21.90px;line-height:21.90px;font-size:10px;font-weight:normal;color:#111;text-align:center;white-space:nowrap;">107%</div>
<div class="bt" style="left:52.00px;top:255.10px;width:54.00px;height:21.90px;line-height:21.90px;font-size:10px;font-weight:normal;color:#111;text-align:center;white-space:nowrap;">2</div>
<div class="bt" style="left:106.00px;top:255.10px;width:128.00px;height:21.90px;line-height:21.90px;font-size:10px;font-weight:normal;color:#111;text-align:center;white-space:nowrap;">Efficiency</div>
<div class="bt" style="left:234.00px;top:255.10px;width:193.50px;height:21.90px;line-height:21.90px;font-size:10px;font-weight:normal;color:#111;text-align:center;white-space:nowrap;">Aircraft Utilization</div>
<div style="left:428.00px;top:255.10px;width:69.00px;height:21.90px;overflow:hidden;line-height:21.90px;font-size:10px;color:#111;white-space:nowrap;-webkit-text-stroke:0.15px #111"><span style="position:absolute;top:0;left:50%;transform:translateX(-50%)">Hours per Day</span></div>
<div class="bt" style="left:497.50px;top:255.10px;width:51.00px;height:21.90px;line-height:21.90px;font-size:10px;font-weight:normal;color:#111;text-align:center;white-space:nowrap;">UTB</div>
<div class="bt" style="left:554.00px;top:255.10px;width:75.50px;height:21.90px;line-height:21.90px;font-size:10px;font-weight:normal;color:#111;text-align:center;white-space:nowrap;">91.5</div>
<div class="bt" style="left:629.50px;top:255.10px;width:65.00px;height:21.90px;line-height:21.90px;font-size:10px;font-weight:normal;color:#111;text-align:center;white-space:nowrap;">92.3</div>
<svg style="position:absolute;left:704.50px;top:261.20px" width="9" height="8.5"><path d="M0 0H9L4.5 8.5Z" fill="#e8120c"/></svg>
<div class="bt" style="left:723.50px;top:255.10px;width:37.00px;height:21.90px;line-height:21.90px;font-size:10px;font-weight:normal;color:#111;text-align:center;white-space:nowrap;">99%</div>
<div class="bt" style="left:760.50px;top:255.10px;width:67.00px;height:21.90px;line-height:21.90px;font-size:10px;font-weight:normal;color:#111;text-align:center;white-space:nowrap;">84.1</div>
<svg style="position:absolute;left:835.50px;top:261.20px" width="9" height="8.5"><path d="M4.5 0L9 8.5H0Z" fill="#e8120c"/></svg>
<div class="bt" style="left:852.50px;top:255.10px;width:40.00px;height:21.90px;line-height:21.90px;font-size:10px;font-weight:normal;color:#111;text-align:center;white-space:nowrap;">109%</div>
<div class="bt" style="left:897.50px;top:255.10px;width:68.00px;height:21.90px;line-height:21.90px;font-size:10px;font-weight:normal;color:#111;text-align:center;white-space:nowrap;">91.7</div>
<div class="bt" style="left:965.50px;top:255.10px;width:67.00px;height:21.90px;line-height:21.90px;font-size:10px;font-weight:normal;color:#111;text-align:center;white-space:nowrap;">92.0</div>
<svg style="position:absolute;left:1041.25px;top:261.20px" width="9" height="8.5"><path d="M0 0H9L4.5 8.5Z" fill="#e8120c"/></svg>
<div class="bt" style="left:1059.00px;top:255.10px;width:48.50px;height:21.90px;line-height:21.90px;font-size:10px;font-weight:normal;color:#111;text-align:center;white-space:nowrap;">100%</div>
<div class="bt" style="left:1107.50px;top:255.10px;width:66.00px;height:21.90px;line-height:21.90px;font-size:10px;font-weight:normal;color:#111;text-align:center;white-space:nowrap;">84.4</div>
<svg style="position:absolute;left:1183.50px;top:261.20px" width="9" height="8.5"><path d="M4.5 0L9 8.5H0Z" fill="#e8120c"/></svg>
<div class="bt" style="left:1202.50px;top:255.10px;width:37.00px;height:21.90px;line-height:21.90px;font-size:10px;font-weight:normal;color:#111;text-align:center;white-space:nowrap;">109%</div>
<div class="bt" style="left:52.00px;top:277.00px;width:54.00px;height:21.90px;line-height:21.90px;font-size:10px;font-weight:normal;color:#111;text-align:center;white-space:nowrap;">3</div>
<div class="bt" style="left:106.00px;top:277.00px;width:128.00px;height:21.90px;line-height:21.90px;font-size:10px;font-weight:normal;color:#111;text-align:center;white-space:nowrap;">Efficiency</div>
<div class="bt" style="left:234.00px;top:277.00px;width:193.50px;height:21.90px;line-height:21.90px;font-size:10px;font-weight:normal;color:#111;text-align:center;white-space:nowrap;">Fuel Efficiency</div>
<div style="left:428.00px;top:277.00px;width:69.00px;height:21.90px;overflow:hidden;line-height:21.90px;font-size:10px;color:#111;white-space:nowrap;-webkit-text-stroke:0.15px #111"><span style="position:absolute;top:0;left:50%;transform:translateX(-50%)">Liters per Flight</span></div>
<div class="bt" style="left:497.50px;top:277.00px;width:51.00px;height:21.90px;line-height:21.90px;font-size:10px;font-weight:normal;color:#111;text-align:center;white-space:nowrap;">LTB</div>
<div class="bt" style="left:554.00px;top:277.00px;width:75.50px;height:21.90px;line-height:21.90px;font-size:10px;font-weight:normal;color:#111;text-align:center;white-space:nowrap;">86.1</div>
<div class="bt" style="left:629.50px;top:277.00px;width:65.00px;height:21.90px;line-height:21.90px;font-size:10px;font-weight:normal;color:#111;text-align:center;white-space:nowrap;">92.1</div>
<svg style="position:absolute;left:704.50px;top:283.10px" width="9" height="8.5"><path d="M0 0H9L4.5 8.5Z" fill="#65a650"/></svg>
<div class="bt" style="left:723.50px;top:277.00px;width:37.00px;height:21.90px;line-height:21.90px;font-size:10px;font-weight:normal;color:#111;text-align:center;white-space:nowrap;">93%</div>
<div class="bt" style="left:760.50px;top:277.00px;width:67.00px;height:21.90px;line-height:21.90px;font-size:10px;font-weight:normal;color:#111;text-align:center;white-space:nowrap;">83.2</div>
<svg style="position:absolute;left:835.50px;top:283.10px" width="9" height="8.5"><path d="M4.5 0L9 8.5H0Z" fill="#65a650"/></svg>
<div class="bt" style="left:852.50px;top:277.00px;width:40.00px;height:21.90px;line-height:21.90px;font-size:10px;font-weight:normal;color:#111;text-align:center;white-space:nowrap;">103%</div>
<div class="bt" style="left:897.50px;top:277.00px;width:68.00px;height:21.90px;line-height:21.90px;font-size:10px;font-weight:normal;color:#111;text-align:center;white-space:nowrap;">86.1</div>
<div class="bt" style="left:965.50px;top:277.00px;width:67.00px;height:21.90px;line-height:21.90px;font-size:10px;font-weight:normal;color:#111;text-align:center;white-space:nowrap;">91.5</div>
<svg style="position:absolute;left:1041.25px;top:283.10px" width="9" height="8.5"><path d="M0 0H9L4.5 8.5Z" fill="#65a650"/></svg>
<div class="bt" style="left:1059.00px;top:277.00px;width:48.50px;height:21.90px;line-height:21.90px;font-size:10px;font-weight:normal;color:#111;text-align:center;white-space:nowrap;">94%</div>
<div class="bt" style="left:1107.50px;top:277.00px;width:66.00px;height:21.90px;line-height:21.90px;font-size:10px;font-weight:normal;color:#111;text-align:center;white-space:nowrap;">83.9</div>
<svg style="position:absolute;left:1183.50px;top:283.10px" width="9" height="8.5"><path d="M4.5 0L9 8.5H0Z" fill="#65a650"/></svg>
<div class="bt" style="left:1202.50px;top:277.00px;width:37.00px;height:21.90px;line-height:21.90px;font-size:10px;font-weight:normal;color:#111;text-align:center;white-space:nowrap;">103%</div>
<div class="bt" style="left:52.00px;top:298.90px;width:54.00px;height:21.90px;line-height:21.90px;font-size:10px;font-weight:normal;color:#111;text-align:center;white-space:nowrap;">4</div>
<div class="bt" style="left:106.00px;top:298.90px;width:128.00px;height:21.90px;line-height:21.90px;font-size:10px;font-weight:normal;color:#111;text-align:center;white-space:nowrap;">Cost Control</div>
<div class="bt" style="left:234.00px;top:298.90px;width:193.50px;height:21.90px;line-height:21.90px;font-size:10px;font-weight:normal;color:#111;text-align:center;white-space:nowrap;">Maintenance Costs</div>
<div style="left:428.00px;top:298.90px;width:69.00px;height:21.90px;overflow:hidden;line-height:21.90px;font-size:10px;color:#111;white-space:nowrap;-webkit-text-stroke:0.15px #111"><span style="position:absolute;top:0;left:50%;transform:translateX(-50%)">Currency (e.g., USD)</span></div>
<div class="bt" style="left:497.50px;top:298.90px;width:51.00px;height:21.90px;line-height:21.90px;font-size:10px;font-weight:normal;color:#111;text-align:center;white-space:nowrap;">LTB</div>
<div class="bt" style="left:554.00px;top:298.90px;width:75.50px;height:21.90px;line-height:21.90px;font-size:10px;font-weight:normal;color:#111;text-align:center;white-space:nowrap;">92.8</div>
<div class="bt" style="left:629.50px;top:298.90px;width:65.00px;height:21.90px;line-height:21.90px;font-size:10px;font-weight:normal;color:#111;text-align:center;white-space:nowrap;">92.1</div>
<svg style="position:absolute;left:704.50px;top:305.00px" width="9" height="8.5"><path d="M4.5 0L9 8.5H0Z" fill="#e8120c"/></svg>
<div class="bt" style="left:723.50px;top:298.90px;width:37.00px;height:21.90px;line-height:21.90px;font-size:10px;font-weight:normal;color:#111;text-align:center;white-space:nowrap;">101%</div>
<div class="bt" style="left:760.50px;top:298.90px;width:67.00px;height:21.90px;line-height:21.90px;font-size:10px;font-weight:normal;color:#111;text-align:center;white-space:nowrap;">84.4</div>
<svg style="position:absolute;left:835.50px;top:305.00px" width="9" height="8.5"><path d="M4.5 0L9 8.5H0Z" fill="#65a650"/></svg>
<div class="bt" style="left:852.50px;top:298.90px;width:40.00px;height:21.90px;line-height:21.90px;font-size:10px;font-weight:normal;color:#111;text-align:center;white-space:nowrap;">110%</div>
<div class="bt" style="left:897.50px;top:298.90px;width:68.00px;height:21.90px;line-height:21.90px;font-size:10px;font-weight:normal;color:#111;text-align:center;white-space:nowrap;">93.5</div>
<div class="bt" style="left:965.50px;top:298.90px;width:67.00px;height:21.90px;line-height:21.90px;font-size:10px;font-weight:normal;color:#111;text-align:center;white-space:nowrap;">92.5</div>
<svg style="position:absolute;left:1041.25px;top:305.00px" width="9" height="8.5"><path d="M4.5 0L9 8.5H0Z" fill="#e8120c"/></svg>
<div class="bt" style="left:1059.00px;top:298.90px;width:48.50px;height:21.90px;line-height:21.90px;font-size:10px;font-weight:normal;color:#111;text-align:center;white-space:nowrap;">101%</div>
<div class="bt" style="left:1107.50px;top:298.90px;width:66.00px;height:21.90px;line-height:21.90px;font-size:10px;font-weight:normal;color:#111;text-align:center;white-space:nowrap;">84.8</div>
<svg style="position:absolute;left:1183.50px;top:305.00px" width="9" height="8.5"><path d="M4.5 0L9 8.5H0Z" fill="#65a650"/></svg>
<div class="bt" style="left:1202.50px;top:298.90px;width:37.00px;height:21.90px;line-height:21.90px;font-size:10px;font-weight:normal;color:#111;text-align:center;white-space:nowrap;">110%</div>
<div class="bt" style="left:52.00px;top:320.80px;width:54.00px;height:21.90px;line-height:21.90px;font-size:10px;font-weight:normal;color:#111;text-align:center;white-space:nowrap;">5</div>
<div class="bt" style="left:106.00px;top:320.80px;width:128.00px;height:21.90px;line-height:21.90px;font-size:10px;font-weight:normal;color:#111;text-align:center;white-space:nowrap;">Revenue &amp; Profit</div>
<div class="bt" style="left:234.00px;top:320.80px;width:193.50px;height:21.90px;line-height:21.90px;font-size:10px;font-weight:normal;color:#111;text-align:center;white-space:nowrap;">Passenger Load Factor</div>
<div style="left:428.00px;top:320.80px;width:69.00px;height:21.90px;overflow:hidden;line-height:21.90px;font-size:10px;color:#111;white-space:nowrap;-webkit-text-stroke:0.15px #111"><span style="position:absolute;top:0;left:50%;transform:translateX(-50%)">Percentage</span></div>
<div class="bt" style="left:497.50px;top:320.80px;width:51.00px;height:21.90px;line-height:21.90px;font-size:10px;font-weight:normal;color:#111;text-align:center;white-space:nowrap;">UTB</div>
<div class="bt" style="left:554.00px;top:320.80px;width:75.50px;height:21.90px;line-height:21.90px;font-size:10px;font-weight:normal;color:#111;text-align:center;white-space:nowrap;">87.7</div>
<div class="bt" style="left:629.50px;top:320.80px;width:65.00px;height:21.90px;line-height:21.90px;font-size:10px;font-weight:normal;color:#111;text-align:center;white-space:nowrap;">93.2</div>
<svg style="position:absolute;left:704.50px;top:326.90px" width="9" height="8.5"><path d="M0 0H9L4.5 8.5Z" fill="#e8120c"/></svg>
<div class="bt" style="left:723.50px;top:320.80px;width:37.00px;height:21.90px;line-height:21.90px;font-size:10px;font-weight:normal;color:#111;text-align:center;white-space:nowrap;">94%</div>
<div class="bt" style="left:760.50px;top:320.80px;width:67.00px;height:21.90px;line-height:21.90px;font-size:10px;font-weight:normal;color:#111;text-align:center;white-space:nowrap;">85.6</div>
<svg style="position:absolute;left:835.50px;top:326.90px" width="9" height="8.5"><path d="M4.5 0L9 8.5H0Z" fill="#e8120c"/></svg>
<div class="bt" style="left:852.50px;top:320.80px;width:40.00px;height:21.90px;line-height:21.90px;font-size:10px;font-weight:normal;color:#111;text-align:center;white-space:nowrap;">102%</div>
<div class="bt" style="left:897.50px;top:320.80px;width:68.00px;height:21.90px;line-height:21.90px;font-size:10px;font-weight:normal;color:#111;text-align:center;white-space:nowrap;">88.5</div>
<div class="bt" style="left:965.50px;top:320.80px;width:67.00px;height:21.90px;line-height:21.90px;font-size:10px;font-weight:normal;color:#111;text-align:center;white-space:nowrap;">94.0</div>
<svg style="position:absolute;left:1041.25px;top:326.90px" width="9" height="8.5"><path d="M0 0H9L4.5 8.5Z" fill="#e8120c"/></svg>
<div class="bt" style="left:1059.00px;top:320.80px;width:48.50px;height:21.90px;line-height:21.90px;font-size:10px;font-weight:normal;color:#111;text-align:center;white-space:nowrap;">94%</div>
<div class="bt" style="left:1107.50px;top:320.80px;width:66.00px;height:21.90px;line-height:21.90px;font-size:10px;font-weight:normal;color:#111;text-align:center;white-space:nowrap;">85.2</div>
<svg style="position:absolute;left:1183.50px;top:326.90px" width="9" height="8.5"><path d="M4.5 0L9 8.5H0Z" fill="#e8120c"/></svg>
<div class="bt" style="left:1202.50px;top:320.80px;width:37.00px;height:21.90px;line-height:21.90px;font-size:10px;font-weight:normal;color:#111;text-align:center;white-space:nowrap;">104%</div>
<div class="bt" style="left:52.00px;top:342.70px;width:54.00px;height:21.90px;line-height:21.90px;font-size:10px;font-weight:normal;color:#111;text-align:center;white-space:nowrap;">6</div>
<div class="bt" style="left:106.00px;top:342.70px;width:128.00px;height:21.90px;line-height:21.90px;font-size:10px;font-weight:normal;color:#111;text-align:center;white-space:nowrap;">Efficiency</div>
<div class="bt" style="left:234.00px;top:342.70px;width:193.50px;height:21.90px;line-height:21.90px;font-size:10px;font-weight:normal;color:#111;text-align:center;white-space:nowrap;">Operational Efficiency</div>
<div style="left:428.00px;top:342.70px;width:69.00px;height:21.90px;overflow:hidden;line-height:21.90px;font-size:10px;color:#111;white-space:nowrap;-webkit-text-stroke:0.15px #111"><span style="position:absolute;top:0;left:50%;transform:translateX(-50%)">Percentage</span></div>
<div class="bt" style="left:497.50px;top:342.70px;width:51.00px;height:21.90px;line-height:21.90px;font-size:10px;font-weight:normal;color:#111;text-align:center;white-space:nowrap;">UTB</div>
<div class="bt" style="left:554.00px;top:342.70px;width:75.50px;height:21.90px;line-height:21.90px;font-size:10px;font-weight:normal;color:#111;text-align:center;white-space:nowrap;">92.5</div>
<div class="bt" style="left:629.50px;top:342.70px;width:65.00px;height:21.90px;line-height:21.90px;font-size:10px;font-weight:normal;color:#111;text-align:center;white-space:nowrap;">91.6</div>
<svg style="position:absolute;left:704.50px;top:348.80px" width="9" height="8.5"><path d="M4.5 0L9 8.5H0Z" fill="#65a650"/></svg>
<div class="bt" style="left:723.50px;top:342.70px;width:37.00px;height:21.90px;line-height:21.90px;font-size:10px;font-weight:normal;color:#111;text-align:center;white-space:nowrap;">101%</div>
<div class="bt" style="left:760.50px;top:342.70px;width:67.00px;height:21.90px;line-height:21.90px;font-size:10px;font-weight:normal;color:#111;text-align:center;white-space:nowrap;">85.7</div>
<svg style="position:absolute;left:835.50px;top:348.80px" width="9" height="8.5"><path d="M4.5 0L9 8.5H0Z" fill="#e8120c"/></svg>
<div class="bt" style="left:852.50px;top:342.70px;width:40.00px;height:21.90px;line-height:21.90px;font-size:10px;font-weight:normal;color:#111;text-align:center;white-space:nowrap;">108%</div>
<div class="bt" style="left:897.50px;top:342.70px;width:68.00px;height:21.90px;line-height:21.90px;font-size:10px;font-weight:normal;color:#111;text-align:center;white-space:nowrap;">93.2</div>
<div class="bt" style="left:965.50px;top:342.70px;width:67.00px;height:21.90px;line-height:21.90px;font-size:10px;font-weight:normal;color:#111;text-align:center;white-space:nowrap;">92.1</div>
<svg style="position:absolute;left:1041.25px;top:348.80px" width="9" height="8.5"><path d="M4.5 0L9 8.5H0Z" fill="#65a650"/></svg>
<div class="bt" style="left:1059.00px;top:342.70px;width:48.50px;height:21.90px;line-height:21.90px;font-size:10px;font-weight:normal;color:#111;text-align:center;white-space:nowrap;">101%</div>
<div class="bt" style="left:1107.50px;top:342.70px;width:66.00px;height:21.90px;line-height:21.90px;font-size:10px;font-weight:normal;color:#111;text-align:center;white-space:nowrap;">85.8</div>
<svg style="position:absolute;left:1183.50px;top:348.80px" width="9" height="8.5"><path d="M4.5 0L9 8.5H0Z" fill="#e8120c"/></svg>
<div class="bt" style="left:1202.50px;top:342.70px;width:37.00px;height:21.90px;line-height:21.90px;font-size:10px;font-weight:normal;color:#111;text-align:center;white-space:nowrap;">109%</div>
<div class="bt" style="left:52.00px;top:364.60px;width:54.00px;height:21.90px;line-height:21.90px;font-size:10px;font-weight:normal;color:#111;text-align:center;white-space:nowrap;">7</div>
<div class="bt" style="left:106.00px;top:364.60px;width:128.00px;height:21.90px;line-height:21.90px;font-size:10px;font-weight:normal;color:#111;text-align:center;white-space:nowrap;">Efficiency</div>
<div class="bt" style="left:234.00px;top:364.60px;width:193.50px;height:21.90px;line-height:21.90px;font-size:10px;font-weight:normal;color:#111;text-align:center;white-space:nowrap;">Baggage Handling Time</div>
<div style="left:428.00px;top:364.60px;width:69.00px;height:21.90px;overflow:hidden;line-height:21.90px;font-size:10px;color:#111;white-space:nowrap;-webkit-text-stroke:0.15px #111"><span style="position:absolute;top:0;left:50%;transform:translateX(-50%)">Minutes</span></div>
<div class="bt" style="left:497.50px;top:364.60px;width:51.00px;height:21.90px;line-height:21.90px;font-size:10px;font-weight:normal;color:#111;text-align:center;white-space:nowrap;">LTB</div>
<div class="bt" style="left:554.00px;top:364.60px;width:75.50px;height:21.90px;line-height:21.90px;font-size:10px;font-weight:normal;color:#111;text-align:center;white-space:nowrap;">98.7</div>
<div class="bt" style="left:629.50px;top:364.60px;width:65.00px;height:21.90px;line-height:21.90px;font-size:10px;font-weight:normal;color:#111;text-align:center;white-space:nowrap;">93.2</div>
<svg style="position:absolute;left:704.50px;top:370.70px" width="9" height="8.5"><path d="M4.5 0L9 8.5H0Z" fill="#e8120c"/></svg>
<div class="bt" style="left:723.50px;top:364.60px;width:37.00px;height:21.90px;line-height:21.90px;font-size:10px;font-weight:normal;color:#111;text-align:center;white-space:nowrap;">106%</div>
<div class="bt" style="left:760.50px;top:364.60px;width:67.00px;height:21.90px;line-height:21.90px;font-size:10px;font-weight:normal;color:#111;text-align:center;white-space:nowrap;">83.4</div>
<svg style="position:absolute;left:835.50px;top:370.70px" width="9" height="8.5"><path d="M4.5 0L9 8.5H0Z" fill="#65a650"/></svg>
<div class="bt" style="left:852.50px;top:364.60px;width:40.00px;height:21.90px;line-height:21.90px;font-size:10px;font-weight:normal;color:#111;text-align:center;white-space:nowrap;">118%</div>
<div class="bt" style="left:897.50px;top:364.60px;width:68.00px;height:21.90px;line-height:21.90px;font-size:10px;font-weight:normal;color:#111;text-align:center;white-space:nowrap;">98.7</div>
<div class="bt" style="left:965.50px;top:364.60px;width:67.00px;height:21.90px;line-height:21.90px;font-size:10px;font-weight:normal;color:#111;text-align:center;white-space:nowrap;">93.4</div>
<svg style="position:absolute;left:1041.25px;top:370.70px" width="9" height="8.5"><path d="M4.5 0L9 8.5H0Z" fill="#e8120c"/></svg>
<div class="bt" style="left:1059.00px;top:364.60px;width:48.50px;height:21.90px;line-height:21.90px;font-size:10px;font-weight:normal;color:#111;text-align:center;white-space:nowrap;">106%</div>
<div class="bt" style="left:1107.50px;top:364.60px;width:66.00px;height:21.90px;line-height:21.90px;font-size:10px;font-weight:normal;color:#111;text-align:center;white-space:nowrap;">83.7</div>
<svg style="position:absolute;left:1183.50px;top:370.70px" width="9" height="8.5"><path d="M4.5 0L9 8.5H0Z" fill="#65a650"/></svg>
<div class="bt" style="left:1202.50px;top:364.60px;width:37.00px;height:21.90px;line-height:21.90px;font-size:10px;font-weight:normal;color:#111;text-align:center;white-space:nowrap;">118%</div>
<div class="bt" style="left:52.00px;top:386.50px;width:54.00px;height:21.90px;line-height:21.90px;font-size:10px;font-weight:normal;color:#111;text-align:center;white-space:nowrap;">8</div>
<div class="bt" style="left:106.00px;top:386.50px;width:128.00px;height:21.90px;line-height:21.90px;font-size:10px;font-weight:normal;color:#111;text-align:center;white-space:nowrap;">Customer Satisfaction</div>
<div class="bt" style="left:234.00px;top:386.50px;width:193.50px;height:21.90px;line-height:21.90px;font-size:10px;font-weight:normal;color:#111;text-align:center;white-space:nowrap;">Customer Satisfaction</div>
<div style="left:428.00px;top:386.50px;width:69.00px;height:21.90px;overflow:hidden;line-height:21.90px;font-size:10px;color:#111;white-space:nowrap;-webkit-text-stroke:0.15px #111"><span style="position:absolute;top:0;left:50%;transform:translateX(-50%)">Score (1-10)</span></div>
<div class="bt" style="left:497.50px;top:386.50px;width:51.00px;height:21.90px;line-height:21.90px;font-size:10px;font-weight:normal;color:#111;text-align:center;white-space:nowrap;">UTB</div>
<div class="bt" style="left:554.00px;top:386.50px;width:75.50px;height:21.90px;line-height:21.90px;font-size:10px;font-weight:normal;color:#111;text-align:center;white-space:nowrap;">94.7</div>
<div class="bt" style="left:629.50px;top:386.50px;width:65.00px;height:21.90px;line-height:21.90px;font-size:10px;font-weight:normal;color:#111;text-align:center;white-space:nowrap;">24.4</div>
<svg style="position:absolute;left:704.50px;top:392.60px" width="9" height="8.5"><path d="M4.5 0L9 8.5H0Z" fill="#65a650"/></svg>
<div class="bt" style="left:723.50px;top:386.50px;width:37.00px;height:21.90px;line-height:21.90px;font-size:10px;font-weight:normal;color:#111;text-align:center;white-space:nowrap;">388%</div>
<div class="bt" style="left:760.50px;top:386.50px;width:67.00px;height:21.90px;line-height:21.90px;font-size:10px;font-weight:normal;color:#111;text-align:center;white-space:nowrap;">12.0</div>
<svg style="position:absolute;left:835.50px;top:392.60px" width="9" height="8.5"><path d="M4.5 0L9 8.5H0Z" fill="#e8120c"/></svg>
<div class="bt" style="left:852.50px;top:386.50px;width:40.00px;height:21.90px;line-height:21.90px;font-size:10px;font-weight:normal;color:#111;text-align:center;white-space:nowrap;">787%</div>
<div class="bt" style="left:897.50px;top:386.50px;width:68.00px;height:21.90px;line-height:21.90px;font-size:10px;font-weight:normal;color:#111;text-align:center;white-space:nowrap;">94.7</div>
<div class="bt" style="left:965.50px;top:386.50px;width:67.00px;height:21.90px;line-height:21.90px;font-size:10px;font-weight:normal;color:#111;text-align:center;white-space:nowrap;">11.9</div>
<svg style="position:absolute;left:1041.25px;top:392.60px" width="9" height="8.5"><path d="M4.5 0L9 8.5H0Z" fill="#65a650"/></svg>
<div class="bt" style="left:1059.00px;top:386.50px;width:48.50px;height:21.90px;line-height:21.90px;font-size:10px;font-weight:normal;color:#111;text-align:center;white-space:nowrap;">796%</div>
<div class="bt" style="left:1107.50px;top:386.50px;width:66.00px;height:21.90px;line-height:21.90px;font-size:10px;font-weight:normal;color:#111;text-align:center;white-space:nowrap;">8.7</div>
<svg style="position:absolute;left:1183.50px;top:392.60px" width="9" height="8.5"><path d="M4.5 0L9 8.5H0Z" fill="#e8120c"/></svg>
<div class="bt" style="left:1202.50px;top:386.50px;width:37.00px;height:21.90px;line-height:21.90px;font-size:10px;font-weight:normal;color:#111;text-align:center;white-space:nowrap;">1090%</div>
<div class="bt" style="left:52.00px;top:408.40px;width:54.00px;height:21.90px;line-height:21.90px;font-size:10px;font-weight:normal;color:#111;text-align:center;white-space:nowrap;">9</div>
<div class="bt" style="left:106.00px;top:408.40px;width:128.00px;height:21.90px;line-height:21.90px;font-size:10px;font-weight:normal;color:#111;text-align:center;white-space:nowrap;">Efficiency</div>
<div class="bt" style="left:234.00px;top:408.40px;width:193.50px;height:21.90px;line-height:21.90px;font-size:10px;font-weight:normal;color:#111;text-align:center;white-space:nowrap;">On-time Departure Rate</div>
<div style="left:428.00px;top:408.40px;width:69.00px;height:21.90px;overflow:hidden;line-height:21.90px;font-size:10px;color:#111;white-space:nowrap;-webkit-text-stroke:0.15px #111"><span style="position:absolute;top:0;left:50%;transform:translateX(-50%)">Percentage</span></div>
<div class="bt" style="left:497.50px;top:408.40px;width:51.00px;height:21.90px;line-height:21.90px;font-size:10px;font-weight:normal;color:#111;text-align:center;white-space:nowrap;">UTB</div>
<div class="bt" style="left:554.00px;top:408.40px;width:75.50px;height:21.90px;line-height:21.90px;font-size:10px;font-weight:normal;color:#111;text-align:center;white-space:nowrap;">99.7</div>
<div class="bt" style="left:629.50px;top:408.40px;width:65.00px;height:21.90px;line-height:21.90px;font-size:10px;font-weight:normal;color:#111;text-align:center;white-space:nowrap;">84.7</div>
<svg style="position:absolute;left:704.50px;top:414.50px" width="9" height="8.5"><path d="M4.5 0L9 8.5H0Z" fill="#65a650"/></svg>
<div class="bt" style="left:723.50px;top:408.40px;width:37.00px;height:21.90px;line-height:21.90px;font-size:10px;font-weight:normal;color:#111;text-align:center;white-space:nowrap;">118%</div>
<div class="bt" style="left:760.50px;top:408.40px;width:67.00px;height:21.90px;line-height:21.90px;font-size:10px;font-weight:normal;color:#111;text-align:center;white-space:nowrap;">88.2</div>
<svg style="position:absolute;left:835.50px;top:414.50px" width="9" height="8.5"><path d="M4.5 0L9 8.5H0Z" fill="#e8120c"/></svg>
<div class="bt" style="left:852.50px;top:408.40px;width:40.00px;height:21.90px;line-height:21.90px;font-size:10px;font-weight:normal;color:#111;text-align:center;white-space:nowrap;">113%</div>
<div class="bt" style="left:897.50px;top:408.40px;width:68.00px;height:21.90px;line-height:21.90px;font-size:10px;font-weight:normal;color:#111;text-align:center;white-space:nowrap;">99.7</div>
<div class="bt" style="left:965.50px;top:408.40px;width:67.00px;height:21.90px;line-height:21.90px;font-size:10px;font-weight:normal;color:#111;text-align:center;white-space:nowrap;">44.2</div>
<svg style="position:absolute;left:1041.25px;top:414.50px" width="9" height="8.5"><path d="M4.5 0L9 8.5H0Z" fill="#65a650"/></svg>
<div class="bt" style="left:1059.00px;top:408.40px;width:48.50px;height:21.90px;line-height:21.90px;font-size:10px;font-weight:normal;color:#111;text-align:center;white-space:nowrap;">226%</div>
<div class="bt" style="left:1107.50px;top:408.40px;width:66.00px;height:21.90px;line-height:21.90px;font-size:10px;font-weight:normal;color:#111;text-align:center;white-space:nowrap;">47.9</div>
<svg style="position:absolute;left:1183.50px;top:414.50px" width="9" height="8.5"><path d="M4.5 0L9 8.5H0Z" fill="#e8120c"/></svg>
<div class="bt" style="left:1202.50px;top:408.40px;width:37.00px;height:21.90px;line-height:21.90px;font-size:10px;font-weight:normal;color:#111;text-align:center;white-space:nowrap;">208%</div>
<div class="bt" style="left:52.00px;top:430.30px;width:54.00px;height:21.90px;line-height:21.90px;font-size:10px;font-weight:normal;color:#111;text-align:center;white-space:nowrap;">10</div>
<div class="bt" style="left:106.00px;top:430.30px;width:128.00px;height:21.90px;line-height:21.90px;font-size:10px;font-weight:normal;color:#111;text-align:center;white-space:nowrap;">Efficiency</div>
<div class="bt" style="left:234.00px;top:430.30px;width:193.50px;height:21.90px;line-height:21.90px;font-size:10px;font-weight:normal;color:#111;text-align:center;white-space:nowrap;">Crew Productivity</div>
<div style="left:428.00px;top:430.30px;width:69.00px;height:21.90px;overflow:hidden;line-height:21.90px;font-size:10px;color:#111;white-space:nowrap;-webkit-text-stroke:0.15px #111"><span style="position:absolute;top:0;left:50%;transform:translateX(-50%)">Units per Crew</span></div>
<div class="bt" style="left:497.50px;top:430.30px;width:51.00px;height:21.90px;line-height:21.90px;font-size:10px;font-weight:normal;color:#111;text-align:center;white-space:nowrap;">UTB</div>
<div class="bt" style="left:554.00px;top:430.30px;width:75.50px;height:21.90px;line-height:21.90px;font-size:10px;font-weight:normal;color:#111;text-align:center;white-space:nowrap;"></div>
<div class="bt" style="left:629.50px;top:430.30px;width:65.00px;height:21.90px;line-height:21.90px;font-size:10px;font-weight:normal;color:#111;text-align:center;white-space:nowrap;">29.6</div>
<svg style="position:absolute;left:704.50px;top:436.40px" width="9" height="8.5"><path d="M0 0H9L4.5 8.5Z" fill="#e8120c"/></svg>
<div class="bt" style="left:723.50px;top:430.30px;width:37.00px;height:21.90px;line-height:21.90px;font-size:10px;font-weight:normal;color:#111;text-align:center;white-space:nowrap;">0%</div>
<div class="bt" style="left:760.50px;top:430.30px;width:67.00px;height:21.90px;line-height:21.90px;font-size:10px;font-weight:normal;color:#111;text-align:center;white-space:nowrap;">17.2</div>
<svg style="position:absolute;left:835.50px;top:436.40px" width="9" height="8.5"><path d="M0 0H9L4.5 8.5Z" fill="#e8120c"/></svg>
<div class="bt" style="left:852.50px;top:430.30px;width:40.00px;height:21.90px;line-height:21.90px;font-size:10px;font-weight:normal;color:#111;text-align:center;white-space:nowrap;">0%</div>
<div class="bt" style="left:897.50px;top:430.30px;width:68.00px;height:21.90px;line-height:21.90px;font-size:10px;font-weight:normal;color:#111;text-align:center;white-space:nowrap;"></div>
<div class="bt" style="left:965.50px;top:430.30px;width:67.00px;height:21.90px;line-height:21.90px;font-size:10px;font-weight:normal;color:#111;text-align:center;white-space:nowrap;">58.3</div>
<svg style="position:absolute;left:1041.25px;top:436.40px" width="9" height="8.5"><path d="M0 0H9L4.5 8.5Z" fill="#e8120c"/></svg>
<div class="bt" style="left:1059.00px;top:430.30px;width:48.50px;height:21.90px;line-height:21.90px;font-size:10px;font-weight:normal;color:#111;text-align:center;white-space:nowrap;">0%</div>
<div class="bt" style="left:1107.50px;top:430.30px;width:66.00px;height:21.90px;line-height:21.90px;font-size:10px;font-weight:normal;color:#111;text-align:center;white-space:nowrap;">47.7</div>
<svg style="position:absolute;left:1183.50px;top:436.40px" width="9" height="8.5"><path d="M0 0H9L4.5 8.5Z" fill="#e8120c"/></svg>
<div class="bt" style="left:1202.50px;top:430.30px;width:37.00px;height:21.90px;line-height:21.90px;font-size:10px;font-weight:normal;color:#111;text-align:center;white-space:nowrap;">0%</div>
</body></html>
